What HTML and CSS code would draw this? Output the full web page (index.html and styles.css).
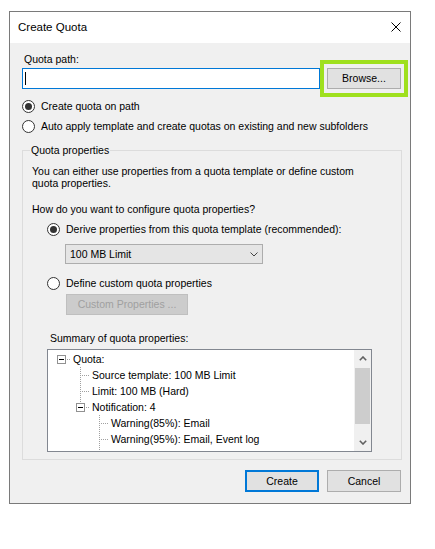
FILE: index.html
```html
<!DOCTYPE html>
<html>
<head>
<meta charset="utf-8">
<title>Create Quota</title>
<link rel="stylesheet" href="styles.css">
</head>
<body>
<div class="window">
  <div class="titlebar">
    <span class="title">Create Quota</span>
    <svg class="close" width="10" height="10" viewBox="0 0 10 10"><path d="M0.5 0.5 L9.5 9.5 M9.5 0.5 L0.5 9.5" stroke="#000" stroke-width="1" fill="none"/></svg>
  </div>
  <div class="body">
    <div class="field-label">Quota path:</div>
    <div class="path-row">
      <div class="input"><span class="caret"></span></div>
      <div class="browse-wrap">
        <button class="btn">Browse...</button>
        <span class="highlight"></span>
      </div>
    </div>
    <div class="radio-row first"><span class="radio checked"></span><span>Create quota on path</span></div>
    <div class="radio-row"><span class="radio"></span><span>Auto apply template and create quotas on existing and new subfolders</span></div>

    <fieldset class="group">
      <legend>Quota properties</legend>
      <p class="desc">You can either use properties from a quota template or define custom<br>quota properties.</p>
      <p class="question">How do you want to configure quota properties?</p>
      <div class="radio-row sub derive"><span class="radio checked"></span><span>Derive properties from this quota template (recommended):</span></div>
      <div class="combo"><span>100 MB Limit</span>
        <svg width="8" height="5" viewBox="0 0 8 5"><polyline points="0.5,0.5 4,4 7.5,0.5" stroke="#444" stroke-width="1" fill="none"/></svg>
      </div>
      <div class="radio-row sub define"><span class="radio"></span><span>Define custom quota properties</span></div>
      <button class="btn disabled custom">Custom Properties ...</button>
      <div class="summary-label">Summary of quota properties:</div>
      <div class="tree">
        <div class="tree-content">
          <div class="row"><span class="cell conn exp"><span class="expander"></span></span><span>Quota:</span></div>
          <div class="row"><span class="cell"></span><span class="cell conn tee"></span><span>Source template: 100 MB Limit</span></div>
          <div class="row"><span class="cell"></span><span class="cell conn tee"></span><span>Limit: 100 MB (Hard)</span></div>
          <div class="row"><span class="cell"></span><span class="cell conn exp elbow"><span class="expander"></span></span><span>Notification: 4</span></div>
          <div class="row"><span class="cell"></span><span class="cell"></span><span class="cell conn tee"></span><span>Warning(85%): Email</span></div>
          <div class="row"><span class="cell"></span><span class="cell"></span><span class="cell conn tee"></span><span>Warning(95%): Email, Event log</span></div>
          <div class="row"><span class="cell"></span><span class="cell"></span><span class="cell conn tee"></span></div>
        </div>
        <div class="scrollbar">
          <div class="sb-btn"><svg width="8" height="5" viewBox="0 0 8 5"><polyline points="0.8,4.2 4,1 7.2,4.2" stroke="#606060" stroke-width="1.6" fill="none"/></svg></div>
          <div class="sb-track"><div class="sb-thumb"></div></div>
          <div class="sb-btn"><svg width="8" height="5" viewBox="0 0 8 5"><polyline points="0.8,0.8 4,4 7.2,0.8" stroke="#606060" stroke-width="1.6" fill="none"/></svg></div>
        </div>
      </div>
    </fieldset>

    <div class="footer">
      <button class="btn default">Create</button>
      <button class="btn">Cancel</button>
    </div>
  </div>
</div>
</body>
</html>
```
FILE: styles.css
```css
* { box-sizing: border-box; }
html, body { margin: 0; padding: 0; background: #fff; }
body {
  font-family: "Liberation Sans", Arial, sans-serif;
  font-size: 10.5px;
  line-height: 13px;
  color: #000;
}
.window {
  margin: 11px 0 0 9px;
  width: 402px;
  border: 1px solid #7a7a7a;
  background: #f0f0f0;
}
.titlebar {
  height: 31px;
  background: #fff;
  display: flex;
  align-items: center;
  justify-content: space-between;
  padding: 0 9px 1px 8px;
}
.title { font-size: 11.5px; }
.close { display: block; }
.body { padding: 10px 9px 11px 12px; }
.field-label { margin-left: 2px; }
.path-row { display: flex; gap: 7px; margin-top: 2px; height: 21px; }
.input {
  width: 298px;
  border: 1px solid #0078d7;
  background: #fff;
  display: flex;
  align-items: center;
  padding-left: 2px;
}
.caret { width: 1px; height: 13px; background: #000; }
.browse-wrap { position: relative; display: flex; }
.btn {
  font: inherit;
  width: 74px;
  height: 21px;
  background: #e1e1e1;
  border: 1px solid #adadad;
  padding: 0;
  color: #000;
  border-radius: 0;
}
.highlight {
  position: absolute;
  left: -7px; right: -7px; top: -8px; bottom: -8px;
  border: 4px solid #9fe01e;
}
.radio-row { display: flex; align-items: center; height: 20px; }
.radio-row.first { margin-top: 7px; }
.radio {
  flex: none;
  width: 13px; height: 13px;
  border: 1px solid #333;
  border-radius: 50%;
  background: #fff;
  margin-right: 6px;
  display: flex; align-items: center; justify-content: center;
}
.radio.checked::after {
  content: "";
  width: 7px; height: 7px;
  border-radius: 50%;
  background: #333;
}
.group {
  margin: 8px 0 0 0;
  width: 380px;
  min-inline-size: 0;
  border: 1px solid #dcdcdc;
  padding: 8px 0 7px 9px;
}
.group legend { padding: 0 1px; margin-left: -2px; }
.desc { margin: 0; line-height: 12px; }
.question { margin: 14px 0 0 0; }
.radio-row.sub { margin-left: 15px; }
.radio-row.derive { margin-top: 3px; }
.combo {
  margin: 5px 0 0 33px;
  width: 198px; height: 20px;
  background: #e5e5e5;
  border: 1px solid #adadad;
  display: flex; align-items: center; justify-content: space-between;
  padding: 0 4px 0 4px;
}
.combo svg { display: block; }
.radio-row.define { margin-top: 9px; }
.btn.custom {
  display: block;
  margin: 1px 0 0 34px;
  width: 122px;
  background: #cccccc;
  border-color: #bfbfbf;
  color: #a0a0a0;
}
.summary-label { margin: 17px 0 0 18px; }
.tree {
  margin: 4px 0 0 15px;
  width: 325px; height: 103px;
  border: 1px solid #828790;
  background: #fff;
  display: flex;
}
.tree-content { flex: 1; overflow: hidden; padding-top: 1px; }
.row { display: flex; align-items: center; height: 16px; white-space: nowrap; flex: none; }
.cell { flex: none; width: 19px; height: 16px; }
.cell.conn { width: 25px; }
.cell.tee {
  background:
    repeating-linear-gradient(to bottom, #a0a0a0 0 1px, transparent 1px 2px) 13px 0 / 1px 100% no-repeat,
    repeating-linear-gradient(to right, #a0a0a0 0 1px, transparent 1px 2px) 15px 8px / 8px 1px no-repeat;
}
.cell.exp {
  display: flex; align-items: center;
  background:
    repeating-linear-gradient(to right, #a0a0a0 0 1px, transparent 1px 2px) 19px 8px / 4px 1px no-repeat;
}
.cell.exp.elbow {
  background:
    repeating-linear-gradient(to bottom, #a0a0a0 0 1px, transparent 1px 2px) 13px 0 / 1px 4px no-repeat,
    repeating-linear-gradient(to right, #a0a0a0 0 1px, transparent 1px 2px) 19px 8px / 4px 1px no-repeat;
}
.expander {
  width: 9px; height: 9px;
  margin-left: 9px;
  border: 1px solid #919191;
  background: #fff;
  display: flex; align-items: center; justify-content: center;
}
.expander::after { content: ""; width: 5px; height: 1px; background: #000; }
.scrollbar { width: 17px; flex: none; background: #f0f0f0; display: flex; flex-direction: column; }
.sb-btn { height: 17px; display: flex; align-items: center; justify-content: center; }
.sb-btn svg { display: block; }
.sb-track { flex: 1; padding: 1px 1px 0 1px; }
.sb-thumb { height: 56px; background: #cdcdcd; }
.footer { display: flex; justify-content: flex-end; gap: 8px; margin-top: 10px; }
.footer .btn { height: 22px; }
.btn.default { border: 2px solid #0078d7; }
```
